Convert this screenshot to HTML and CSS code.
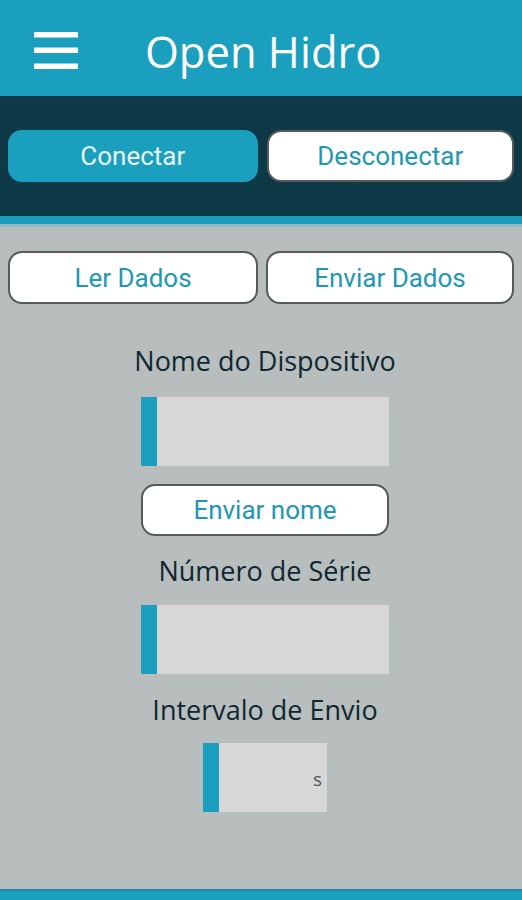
FILE: index.html
```html
<!DOCTYPE html>
<html lang="pt">
<head>
<meta charset="utf-8">
<title>Open Hidro</title>
<link rel="stylesheet" href="styles.css">
</head>
<body>
<div class="app">
  <header class="topbar">
    <button class="menu" aria-label="Menu">
      <svg width="44" height="37" viewBox="0 0 44 37"><rect x="0" y="0" width="44" height="5.5" fill="#fff"/><rect x="0" y="15.5" width="44" height="5.5" fill="#fff"/><rect x="0" y="31.5" width="44" height="5.5" fill="#fff"/></svg>
    </button>
    <h1 class="title">Open Hidro</h1>
  </header>
  <section class="connect">
    <button class="btn btn-primary">Conectar</button>
    <button class="btn btn-outline">Desconectar</button>
  </section>
  <div class="strip"></div>
  <main class="main">
    <div class="row">
      <button class="btn btn-outline">Ler Dados</button>
      <button class="btn btn-outline">Enviar Dados</button>
    </div>
    <div class="form">
      <label class="label l1">Nome do Dispositivo</label>
      <div class="field wide f1"><span class="bar"></span></div>
      <button class="btn btn-outline send">Enviar nome</button>
      <label class="label l2">Número de Série</label>
      <div class="field wide f2"><span class="bar"></span></div>
      <label class="label l3">Intervalo de Envio</label>
      <div class="field small f3"><span class="bar"></span><span class="unit">s</span></div>
    </div>
  </main>
  <footer class="bottombar"></footer>
</div>
</body>
</html>
```

FILE: styles.css
```css
* { box-sizing: border-box; }
html, body { margin: 0; padding: 0; }
body { background: #b8bdbd; font-family: "Open Sans", sans-serif; }
.app { width: 522px; height: 900px; display: flex; flex-direction: column; overflow: hidden; }

.topbar { height: 96px; background: #1b9fbe; display: flex; align-items: flex-start; flex-shrink: 0; }
.menu { background: none; border: 0; padding: 0; margin: 32px 0 0 34px; width: 44px; height: 37px; display: block; }
.menu svg { display: block; }
.title { margin: 22px 0 0 67px; color: #fff; font-family: "Open Sans", sans-serif; font-weight: 400; font-size: 43.5px; line-height: 60px; }

.connect { height: 120px; background: #0e3a47; display: flex; gap: 9px; padding: 34px 8px 0 8px; flex-shrink: 0; }
.strip { height: 11px; background: #1a9dbb; border-bottom: 3px solid #8fb8c2; flex-shrink: 0; }

.btn { font-family: Roboto, sans-serif; font-size: 26px; height: 52px; border-radius: 14px; display: flex; align-items: center; justify-content: center; padding: 0; }
.btn-primary { width: 250px; background: #1b9fbe; color: #e8f6fa; border: 0; }
.btn-outline { width: 248px; background: #fff; color: #2097b3; border: 2px solid #555a5c; }

.main { flex: 1; padding: 24px 8px 0 8px; display: flex; flex-direction: column; }
.row { display: flex; gap: 8px; }
.row .btn { height: 53px; }
.row .btn:first-child { width: 250px; }

.form { display: flex; flex-direction: column; align-items: center; padding-left: 8px; }
.label { display: block; font-family: "Open Sans", sans-serif; font-size: 27px; line-height: 34px; color: #0f2731; }
.l1 { margin-top: 40px; }
.l2 { margin-top: 18px; }
.l3 { margin-top: 19px; }

.field { height: 69px; background: #d7d7d7; display: flex; align-items: center; }
.f1 { margin-top: 19px; }
.f2 { margin-top: 17px; }
.f3 { margin-top: 16px; }
.field.wide { width: 248px; }
.field.small { width: 124px; }
.bar { width: 16px; align-self: stretch; background: #1a9fbe; }
.unit { margin-left: auto; margin-right: 5px; font-family: "Open Sans", sans-serif; font-size: 19px; color: #555; position: relative; top: 1px; }

.send { margin-top: 18px; }

.bottombar { height: 11px; background: #1a9fbe; border-top: 2px solid #1a8ea8; flex-shrink: 0; }
```
